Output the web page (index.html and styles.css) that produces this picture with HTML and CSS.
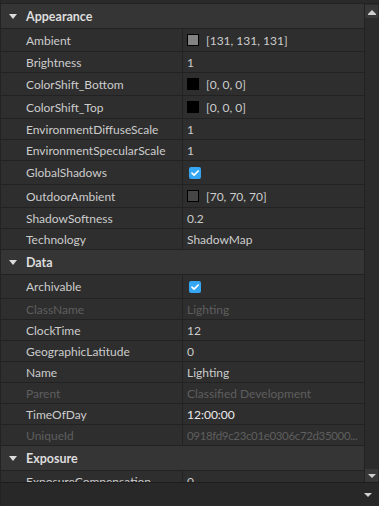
FILE: index.html
```html
<!DOCTYPE html>
<html lang="en">
<head>
  <meta charset="UTF-8">
  <title>Properties</title>
  <link rel="stylesheet" href="styles.css">
</head>
<body>
  <div class="panel">
    <div class="top-strip"></div>
    <div class="body">
      <div class="list">
        <div class="section">
          <div class="section-head"><span class="caret"></span>Appearance</div>
          <div class="row row-color">
            <div class="name">Ambient</div>
            <div class="value"><span class="swatch swatch-131"></span>[131, 131, 131]</div>
          </div>
          <div class="row">
            <div class="name">Brightness</div>
            <div class="value">1</div>
          </div>
          <div class="row row-color">
            <div class="name">ColorShift_Bottom</div>
            <div class="value"><span class="swatch swatch-black"></span>[0, 0, 0]</div>
          </div>
          <div class="row row-color">
            <div class="name">ColorShift_Top</div>
            <div class="value"><span class="swatch swatch-black"></span>[0, 0, 0]</div>
          </div>
          <div class="row">
            <div class="name">EnvironmentDiffuseScale</div>
            <div class="value">1</div>
          </div>
          <div class="row">
            <div class="name">EnvironmentSpecularScale</div>
            <div class="value">1</div>
          </div>
          <div class="row row-bool">
            <div class="name">GlobalShadows</div>
            <div class="value"><span class="check"><svg width="12" height="12" viewBox="0 0 12 12"><path d="M3 6.2 L5.1 8.2 L9.2 4" fill="none" stroke="#fff" stroke-width="1.7" stroke-linecap="round" stroke-linejoin="round"/></svg></span></div>
          </div>
          <div class="row row-color">
            <div class="name">OutdoorAmbient</div>
            <div class="value"><span class="swatch swatch-70"></span>[70, 70, 70]</div>
          </div>
          <div class="row">
            <div class="name">ShadowSoftness</div>
            <div class="value">0.2</div>
          </div>
          <div class="row">
            <div class="name">Technology</div>
            <div class="value">ShadowMap</div>
          </div>
        </div>

        <div class="section">
          <div class="section-head"><span class="caret"></span>Data</div>
          <div class="row row-bool">
            <div class="name">Archivable</div>
            <div class="value"><span class="check"><svg width="12" height="12" viewBox="0 0 12 12"><path d="M3 6.2 L5.1 8.2 L9.2 4" fill="none" stroke="#fff" stroke-width="1.7" stroke-linecap="round" stroke-linejoin="round"/></svg></span></div>
          </div>
          <div class="row disabled">
            <div class="name">ClassName</div>
            <div class="value">Lighting</div>
          </div>
          <div class="row">
            <div class="name">ClockTime</div>
            <div class="value">12</div>
          </div>
          <div class="row">
            <div class="name">GeographicLatitude</div>
            <div class="value">0</div>
          </div>
          <div class="row">
            <div class="name">Name</div>
            <div class="value">Lighting</div>
          </div>
          <div class="row disabled">
            <div class="name">Parent</div>
            <div class="value">Classified Development</div>
          </div>
          <div class="row">
            <div class="name">TimeOfDay</div>
            <div class="value bright">12:00:00</div>
          </div>
          <div class="row disabled">
            <div class="name">UniqueId</div>
            <div class="value value-id">0918fd9c23c01e0306c72d35000...</div>
          </div>
        </div>

        <div class="section">
          <div class="section-head"><span class="caret"></span>Exposure</div>
          <div class="row">
            <div class="name">ExposureCompensation</div>
            <div class="value">0</div>
          </div>
        </div>
      </div>

      <div class="scrollbar">
        <div class="scroll-btn"><span class="arrow-up"></span></div>
        <div class="scroll-track"></div>
        <div class="scroll-btn"><span class="arrow-down"></span></div>
      </div>
    </div>
    <div class="footer"><span class="arrow-down"></span></div>
  </div>
</body>
</html>
```

FILE: styles.css
```css
body {
  margin: 0;
  width: 379px;
  height: 506px;
  overflow: hidden;
  background: #2a2a2a;
  font-family: Lato, "Open Sans", sans-serif;
  font-size: 12px;
  color: #cccccc;
}

.panel {
  display: flex;
  flex-direction: column;
  height: 506px;
  border-left: 1px solid #232323;
}

.top-strip {
  height: 4px;
  background: #2a2a2a;
  border-bottom: 1px solid #232323;
  box-sizing: border-box;
}

.body {
  display: flex;
  height: 478px;
}

.list {
  width: 364px;
  height: 478px;
  overflow: hidden;
  background: #2e2e2e;
}

/* section header */
.section-head {
  display: flex;
  align-items: center;
  height: 24px;
  padding-left: 25px;
  position: relative;
  background: #353535;
  border-bottom: 1px solid #222222;
  font-weight: bold;
  font-size: 12.5px;
  color: #dddddd;
}

.caret {
  position: absolute;
  left: 8px;
  top: 10px;
  width: 0;
  height: 0;
  border-left: 4px solid transparent;
  border-right: 4px solid transparent;
  border-top: 5px solid #dcdcdc;
}

/* property rows */
.row {
  display: grid;
  grid-template-columns: 181px 1fr;
  height: 20px;
  border-bottom: 1px solid #222222;
}

.row-color {
  height: 22px;
}

.row-bool {
  height: 23px;
}

.name {
  display: flex;
  align-items: center;
  padding-left: 25px;
  white-space: nowrap;
  overflow: hidden;
}

.value {
  display: flex;
  align-items: center;
  padding-left: 4px;
  border-left: 1px solid #222222;
  white-space: nowrap;
  overflow: hidden;
}

.value-id {
  font-size: 11.5px;
  letter-spacing: -0.35px;
}

.bright {
  color: #ececec;
}

.disabled .name,
.disabled .value {
  color: #5e5e5e;
}

.swatch {
  width: 10px;
  height: 10px;
  border: 1px solid #000;
  margin-right: 7px;
}

.swatch-131 { background: #838383; }
.swatch-black { background: #000; }
.swatch-70 { background: #464646; }

.check {
  display: flex;
  width: 12px;
  height: 12px;
  margin-left: 2px;
  border-radius: 2px;
  background: #35a6f3;
}

/* scrollbar */
.scrollbar {
  display: flex;
  flex-direction: column;
  width: 13px;
  padding-right: 1px;
  background: #2b2b2b;
  border-left: 1px solid #222222;
}

.scroll-btn {
  display: flex;
  align-items: center;
  justify-content: center;
  height: 13px;
  margin-top: 1px;
  background: #383838;
}

.scroll-track {
  flex-grow: 1;
}

.arrow-up {
  width: 0;
  height: 0;
  border-left: 4px solid transparent;
  border-right: 4px solid transparent;
  border-bottom: 4px solid #cfcfcf;
  box-shadow: 0 1px 0 #cfcfcf;
}

.arrow-down {
  width: 0;
  height: 0;
  border-left: 4px solid transparent;
  border-right: 4px solid transparent;
  border-top: 4px solid #cfcfcf;
}

/* bottom bar */
.footer {
  display: flex;
  align-items: center;
  justify-content: flex-end;
  flex-grow: 1;
  padding-right: 7px;
  background: #282828;
  border-top: 1px solid #1d1d1d;
}
```
